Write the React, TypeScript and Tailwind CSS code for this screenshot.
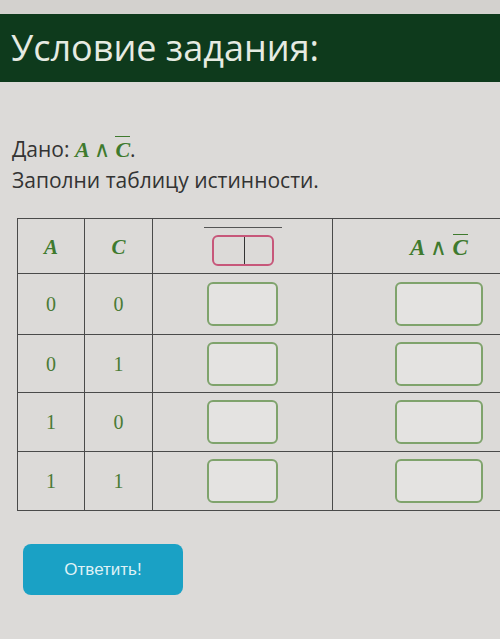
import React from "react";

const rows = [
  ["0", "0"],
  ["0", "1"],
  ["1", "0"],
  ["1", "1"],
];
const rowHeights = ["h-[61px]", "h-[58px]", "h-[59px]", "h-[58px]"];

function Formula() {
  return (
    <span className="font-['Liberation_Serif',serif] italic font-bold text-[#3f7a2e]">
      A <span className="not-italic font-normal">∧</span>{" "}
      <span className="border-t border-[#3f7a2e] leading-none">C</span>
    </span>
  );
}

function AnswerBox({ wide }: { wide?: boolean }) {
  return (
    <div
      className={`${wide ? "w-[88px]" : "w-[71px]"} h-[44px] rounded-md border-2 border-[#7fa36c] bg-[#e4e3e1]`}
    />
  );
}

export default function App() {
  return (
    <div className="w-[500px] h-[639px] overflow-hidden bg-[#dcdad8] font-['Open_Sans',sans-serif]">
      <div className="h-[14px] bg-[#d3d1ce]" />
      <div className="h-[68px] bg-[#0e3a1c] flex items-center pl-[11px]">
        <h1 className="text-[36px] leading-none text-[#e6ebe2]">Условие задания:</h1>
      </div>

      <div className="pl-[12px] pt-[51px] text-[21px] leading-[30px] text-[#333]">
        <p>
          Дано: <span className="text-[22px]"><Formula /></span>.
        </p>
        <p>Заполни таблицу истинности.</p>
      </div>

      <div className="ml-[17px] mt-[23px] w-[540px] border border-[#4a4a4a] border-r-0">
        <div className="flex h-[55px] border-b border-[#4a4a4a]">
          <div className="w-[67px] border-r border-[#4a4a4a] flex items-center justify-center pt-[4px] font-['Liberation_Serif',serif] italic font-bold text-[21px] text-[#3f7a2e]">
            A
          </div>
          <div className="w-[68px] border-r border-[#4a4a4a] flex items-center justify-center pt-[4px] font-['Liberation_Serif',serif] italic font-bold text-[21px] text-[#3f7a2e]">
            C
          </div>
          <div className="w-[180px] border-r border-[#4a4a4a] flex items-center justify-center">
            <div className="border-t border-[#555] pt-[7px] px-[8px]">
              <div className="flex w-[62px] h-[31px] rounded-md border-2 border-[#c7577a] overflow-hidden">
                <div className="w-[30px]" />
                <div className="w-px bg-[#333]" />
              </div>
            </div>
          </div>
          <div className="w-[212px] flex items-center justify-center pt-[4px] text-[23px]">
            <Formula />
          </div>
        </div>
        {rows.map(([a, c], i) => (
          <div
            key={i}
            className={`flex ${rowHeights[i]} ${i < rows.length - 1 ? "border-b border-[#4a4a4a]" : ""}`}
          >
            <div className="w-[67px] border-r border-[#4a4a4a] flex items-center justify-center font-['Liberation_Serif',serif] text-[20px] text-[#4a7a35]">
              {a}
            </div>
            <div className="w-[68px] border-r border-[#4a4a4a] flex items-center justify-center font-['Liberation_Serif',serif] text-[20px] text-[#4a7a35]">
              {c}
            </div>
            <div className="w-[180px] border-r border-[#4a4a4a] flex items-center justify-center">
              <AnswerBox />
            </div>
            <div className="w-[212px] flex items-center justify-center">
              <AnswerBox wide />
            </div>
          </div>
        ))}
      </div>

      <div className="pl-[23px] pt-[33px]">
        <button className="w-[160px] h-[51px] rounded-lg bg-[#1aa1c5] text-[#dff1f6] text-[17px] font-['Liberation_Sans',sans-serif]">
          Ответить!
        </button>
      </div>
    </div>
  );
}
